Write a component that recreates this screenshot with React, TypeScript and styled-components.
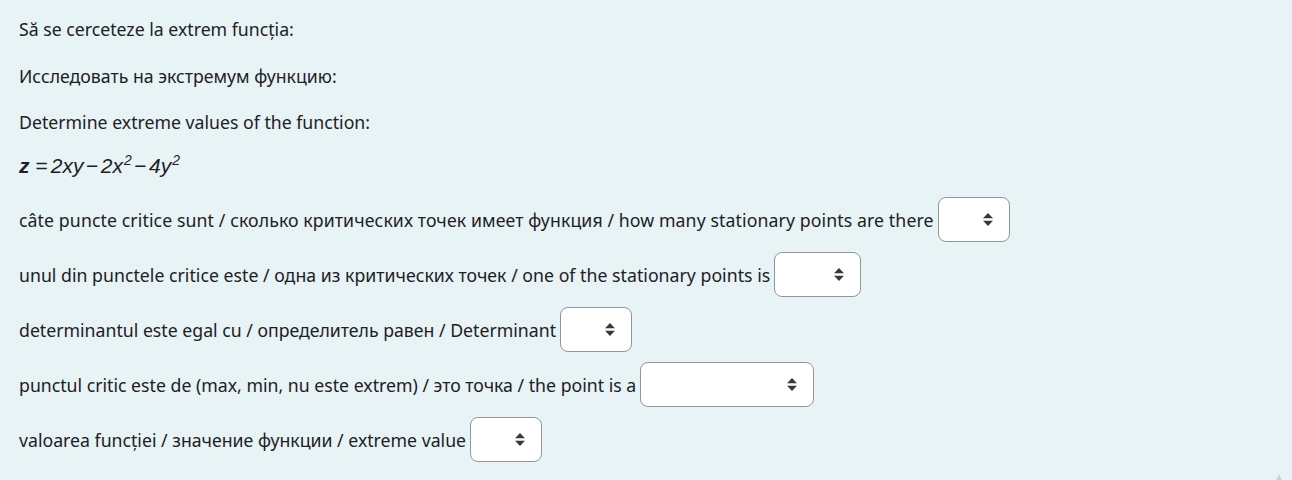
import React from "react";
import styled, { createGlobalStyle } from "styled-components";

const Global = createGlobalStyle`
  html, body { margin: 0; padding: 0; background: #e7f3f5; }
  body { font-family: "Noto Sans", "Open Sans", sans-serif; color: #1d2125; }
`;

const Page = styled.div`
  position: relative;
  width: 1292px;
  height: 480px;
  overflow: hidden;
  background: #e7f3f5;
  padding: 17px 0 0 19px;
  box-sizing: border-box;
  display: flex;
  flex-direction: column;
`;

const Para = styled.p`
  margin: 0 0 22.5px 0;
  font-size: 17.7px;
  line-height: 24px;
  height: 24px;
  white-space: nowrap;
`;

const Formula = styled.div`
  margin: -3.5px 0 18px 0;
  height: 26px;
  display: flex;
  align-items: center;
  font-family: "Liberation Sans", Arial, sans-serif;
  font-style: italic;
  font-size: 21px;
`;

const Z = styled.span`
  font-weight: bold;
  margin-right: 3px;
`;

const Op = styled.span<{ $gap?: number }>`
  font-style: normal;
  margin: 0 ${(p) => p.$gap ?? 2.5}px;
`;

const Sup = styled.sup`
  font-size: 14px;
  vertical-align: 8px;
  line-height: 0;
  margin-left: 1px;
`;

const Row = styled.div`
  display: flex;
  align-items: center;
  height: 45px;
  margin-bottom: 10px;
  font-size: 17.7px;
  white-space: nowrap;
`;

const Label = styled.span<{ $ls?: number }>`
  margin-right: 4px;
  letter-spacing: ${(p) => p.$ls ?? 0}px;
`;

const Select = styled.div<{ $w: number }>`
  position: relative;
  box-sizing: border-box;
  width: ${(p) => p.$w}px;
  height: 45px;
  background: #fff;
  border: 1px solid #8f959e;
  border-radius: 8px;
`;

const Arrow = styled.svg`
  position: absolute;
  right: 16px;
  top: 50%;
  margin-top: -6.5px;
  width: 10px;
  height: 13px;
`;

const Caret = styled.div`
  position: absolute;
  right: 8px;
  bottom: -6px;
  width: 0;
  height: 0;
  border-left: 5px solid transparent;
  border-right: 5px solid transparent;
  border-bottom: 12px solid #c9d0d4;
`;

const Dropdown = ({ w }: { w: number }) => (
  <Select $w={w}>
    <Arrow viewBox="0 0 4 5" preserveAspectRatio="none">
      <path d="M2 0L0 2h4zm0 5L0 3h4z" fill="#343a40" />
    </Arrow>
  </Select>
);

const rows: { text: string; w: number; ls?: number }[] = [
  {
    text:
      "câte puncte critice sunt / сколько критических точек имеет функция / how many stationary points are there",
    w: 72,
    ls: 0.1,
  },
  {
    text: "unul din punctele critice este / одна из критических точек / one of the stationary points is",
    w: 87,
    ls: 0.02,
  },
  { text: "determinantul este egal cu / определитель равен / Determinant", w: 72 },
  {
    text: "punctul critic este de (max, min, nu este extrem) / это точка / the point is a",
    w: 174,
  },
  { text: "valoarea funcției / значение функции / extreme value", w: 72 },
];

export default function App() {
  return (
    <>
      <Global />
      <Page>
        <Para>Să se cerceteze la extrem funcția:</Para>
        <Para>Исследовать на экстремум функцию:</Para>
        <Para>Determine extreme values of the function:</Para>
        <Formula>
          <Z>z</Z>
          <Op $gap={3}>=</Op>
          <span>2xy</span>
          <Op>−</Op>
          <span>
            2x<Sup>2</Sup>
          </span>
          <Op>−</Op>
          <span>
            4y<Sup>2</Sup>
          </span>
        </Formula>
        {rows.map((r) => (
          <Row key={r.text}>
            <Label $ls={r.ls}>{r.text}</Label>
            <Dropdown w={r.w} />
          </Row>
        ))}
        <Caret />
      </Page>
    </>
  );
}
